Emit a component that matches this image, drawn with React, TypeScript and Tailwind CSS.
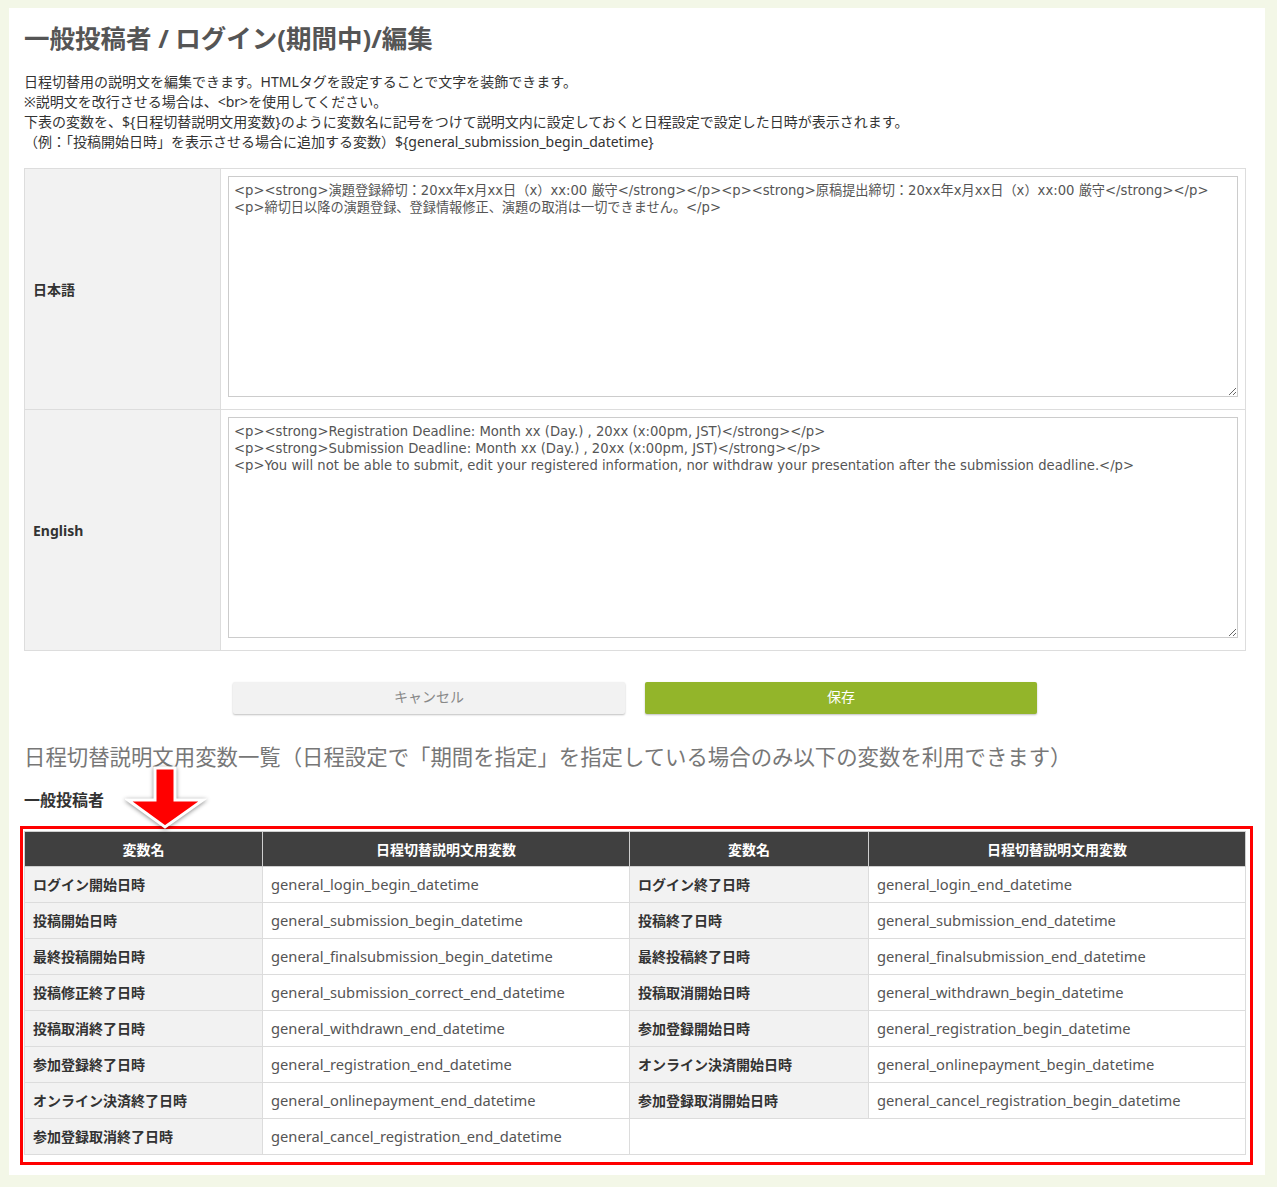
import React from 'react'

const jp = '"Noto Sans", "Noto Sans CJK JP", sans-serif'
const mono = '"DejaVu Sans", "Noto Sans CJK JP", sans-serif'

const rows: [string, string, string | null, string | null][] = [
  ['ログイン開始日時', 'general_login_begin_datetime', 'ログイン終了日時', 'general_login_end_datetime'],
  ['投稿開始日時', 'general_submission_begin_datetime', '投稿終了日時', 'general_submission_end_datetime'],
  ['最終投稿開始日時', 'general_finalsubmission_begin_datetime', '最終投稿終了日時', 'general_finalsubmission_end_datetime'],
  ['投稿修正終了日時', 'general_submission_correct_end_datetime', '投稿取消開始日時', 'general_withdrawn_begin_datetime'],
  ['投稿取消終了日時', 'general_withdrawn_end_datetime', '参加登録開始日時', 'general_registration_begin_datetime'],
  ['参加登録終了日時', 'general_registration_end_datetime', 'オンライン決済開始日時', 'general_onlinepayment_begin_datetime'],
  ['オンライン決済終了日時', 'general_onlinepayment_end_datetime', '参加登録取消開始日時', 'general_cancel_registration_begin_datetime'],
  ['参加登録取消終了日時', 'general_cancel_registration_end_datetime', null, null],
]

const jaText =
  '<p><strong>演題登録締切：20xx年x月xx日（x）xx:00 厳守</strong></p><p><strong>原稿提出締切：20xx年x月xx日（x）xx:00 厳守</strong></p>\n<p>締切日以降の演題登録、登録情報修正、演題の取消は一切できません。</p>'

const enText =
  '<p><strong>Registration Deadline: Month xx (Day.) , 20xx (x:00pm, JST)</strong></p>\n<p><strong>Submission Deadline: Month xx (Day.) , 20xx (x:00pm, JST)</strong></p>\n<p>You will not be able to submit, edit your registered information, nor withdraw your presentation after the submission deadline.</p>'

function EditorRow({ label, value }: { label: string; value: string }) {
  return (
    <tr>
      <th className="w-[196px] border border-[#dddddd] bg-[#f2f2f2] pl-2 text-left align-middle text-[14px] font-bold text-[#333]">
        {label}
      </th>
      <td className="border border-[#dddddd] bg-white px-[7px] pt-[7px] pb-[12px]">
        <textarea
          readOnly
          defaultValue={value}
          className="block h-[221px] w-full border border-[#cccccc] px-[5px] py-[5px] text-[13.2px] leading-[17px] text-[#555] outline-none"
          style={{ fontFamily: mono }}
        />
      </td>
    </tr>
  )
}

export default function App() {
  return (
    <div className="min-h-[1187px] bg-[#f3f7e7] pt-2 pr-3 pb-[13px] pl-[9px]" style={{ fontFamily: jp }}>
      <div className="bg-white pt-4 pr-[19px] pb-5 pl-[15px]">
        <h1 className="text-[25.5px] leading-[28px] font-bold text-[#555]">一般投稿者 / ログイン(期間中)/編集</h1>

        <div className="mt-5 text-[14px] leading-[20px] text-[#333]">
          <p>日程切替用の説明文を編集できます。HTMLタグを設定することで文字を装飾できます。</p>
          <p>※説明文を改行させる場合は、&lt;br&gt;を使用してください。</p>
          <p>
            下表の変数を、${'{'}日程切替説明文用変数{'}'}のように変数名に記号をつけて説明文内に設定しておくと日程設定で設定した日時が表示されます。
          </p>
          <p>（例：「投稿開始日時」を表示させる場合に追加する変数）${'{'}general_submission_begin_datetime{'}'}</p>
        </div>

        <table className="mt-4 w-full table-fixed border-collapse">
          <tbody>
            <EditorRow label="日本語" value={jaText} />
            <EditorRow label="English" value={enText} />
          </tbody>
        </table>

        <div className="mt-[31px] flex justify-center gap-5">
          <button className="h-8 w-[392px] rounded-[2px] bg-[#f2f2f2] pb-[3px] text-[14px] text-[#888] shadow-[0_1px_2px_rgba(0,0,0,0.25)]">
            キャンセル
          </button>
          <button className="h-8 w-[392px] rounded-[2px] bg-[#93b52a] pb-[3px] text-[14px] text-white shadow-[0_1px_2px_rgba(0,0,0,0.25)]">
            保存
          </button>
        </div>

        <h2 className="mt-[29px] text-[21.4px] leading-[28px] font-normal text-[#777]">
          日程切替説明文用変数一覧（日程設定で「期間を指定」を指定している場合のみ以下の変数を利用できます）
        </h2>

        <div className="relative mt-[17px]">
          <h3 className="text-[16px] leading-[24px] font-bold text-[#333]">一般投稿者</h3>
          <svg
            className="absolute top-[-23px] left-[101px] z-10"
            width="82"
            height="66"
            viewBox="0 0 82 66"
            style={{ filter: 'drop-shadow(0 1px 2px rgba(0,0,0,0.45))' }}
          >
            <polygon
              points="30,3 50,3 50,35 78,35 40,62 3,35 30,35"
              fill="#ff0000"
              stroke="#ffffff"
              strokeWidth="3"
              strokeLinejoin="miter"
            />
          </svg>
        </div>

        <div className="relative mt-[19px]">
          <div className="pointer-events-none absolute -top-[5px] -right-[7px] -bottom-[10px] -left-[4px] border-[3px] border-[#ff0000]" />
          <table className="w-full table-fixed border-collapse text-[14px]">
            <colgroup>
              <col className="w-[238px]" />
              <col className="w-[367px]" />
              <col className="w-[239px]" />
              <col />
            </colgroup>
            <thead>
              <tr className="h-[35px] bg-[#404040] text-white">
                <th className="border border-[#cfcfcf] font-bold">変数名</th>
                <th className="border border-[#cfcfcf] font-bold">日程切替説明文用変数</th>
                <th className="border border-[#cfcfcf] font-bold">変数名</th>
                <th className="border border-[#cfcfcf] font-bold">日程切替説明文用変数</th>
              </tr>
            </thead>
            <tbody>
              {rows.map(([l1, v1, l2, v2]) => (
                <tr key={v1} className="h-[36px]">
                  <td className="border border-[#dcdcdc] bg-[#f2f2f2] pl-2 font-bold text-[#333]">{l1}</td>
                  <td className="border border-[#dcdcdc] bg-white pl-[8px] text-[14.7px] text-[#555]">{v1}</td>
                  {l2 ? (
                    <>
                      <td className="border border-[#dcdcdc] bg-[#f2f2f2] pl-2 font-bold text-[#333]">{l2}</td>
                      <td className="border border-[#dcdcdc] bg-white pl-[8px] text-[14.7px] text-[#555]">{v2}</td>
                    </>
                  ) : (
                    <td colSpan={2} className="border border-[#dcdcdc] bg-white" />
                  )}
                </tr>
              ))}
            </tbody>
          </table>
        </div>
      </div>
    </div>
  )
}
